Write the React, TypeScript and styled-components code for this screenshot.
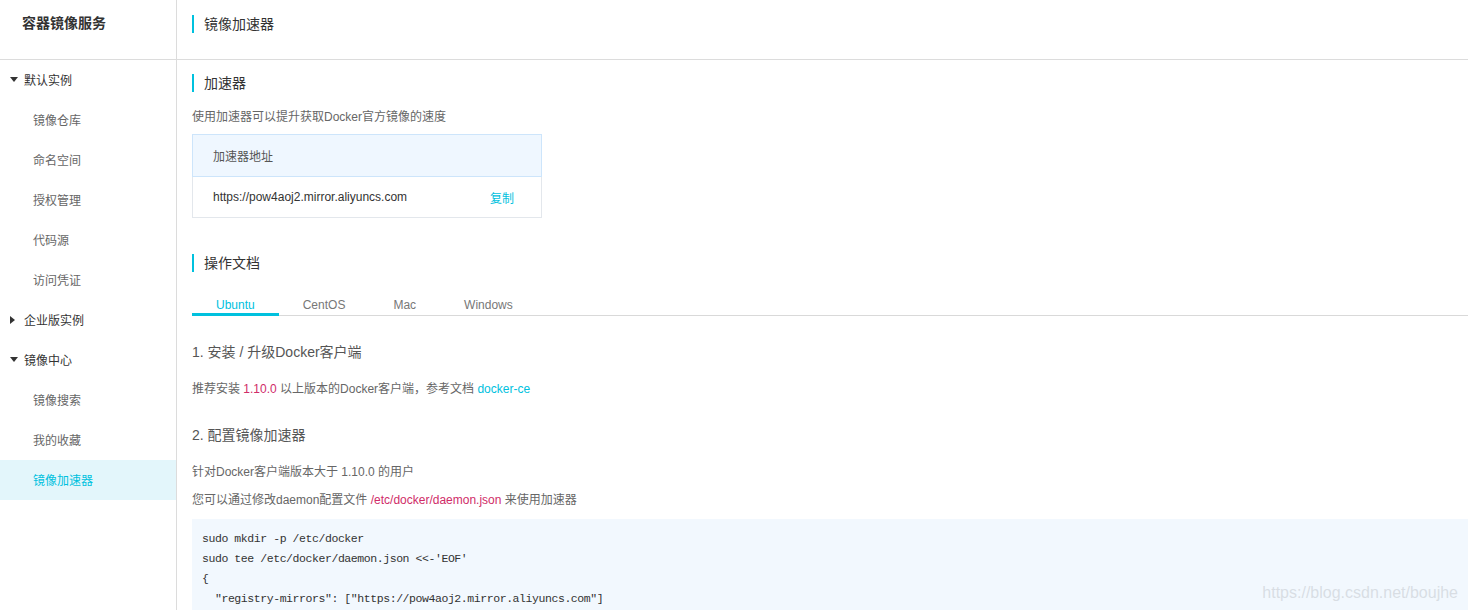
import React from 'react';
import styled, { createGlobalStyle } from 'styled-components';

const GlobalStyle = createGlobalStyle`
  html, body {
    margin: 0;
    padding: 0;
    background: #fff;
  }
  * {
    box-sizing: border-box;
  }
  body {
    font-family: "Liberation Sans", Arial, "Noto Sans CJK SC", sans-serif;
    color: #333;
  }
`;

type NavItem = {
  label: string;
  level: 'group' | 'item';
  open?: boolean;
  active?: boolean;
};

const navItems: NavItem[] = [
  { label: '默认实例', level: 'group', open: true },
  { label: '镜像仓库', level: 'item' },
  { label: '命名空间', level: 'item' },
  { label: '授权管理', level: 'item' },
  { label: '代码源', level: 'item' },
  { label: '访问凭证', level: 'item' },
  { label: '企业版实例', level: 'group', open: false },
  { label: '镜像中心', level: 'group', open: true },
  { label: '镜像搜索', level: 'item' },
  { label: '我的收藏', level: 'item' },
  { label: '镜像加速器', level: 'item', active: true },
];

const tabs = ['Ubuntu', 'CentOS', 'Mac', 'Windows'];

const codeLines = [
  'sudo mkdir -p /etc/docker',
  "sudo tee /etc/docker/daemon.json <<-'EOF'",
  '{',
  '  "registry-mirrors": ["https://pow4aoj2.mirror.aliyuncs.com"]',
];

const Caret = ({ open }: { open?: boolean }) => (
  <CaretBox>
    {open ? (
      <svg width="8" height="5" viewBox="0 0 8 5">
        <path d="M0 0 L8 0 L4 5 Z" fill="#333" />
      </svg>
    ) : (
      <svg width="5" height="8" viewBox="0 0 5 8">
        <path d="M0 0 L5 4 L0 8 Z" fill="#333" />
      </svg>
    )}
  </CaretBox>
);

export default function App() {
  return (
    <>
      <GlobalStyle />
      <Page>
        <Sidebar>
          <SidebarHeader>容器镜像服务</SidebarHeader>
          <Nav>
            {navItems.map((item) =>
              item.level === 'group' ? (
                <GroupRow key={item.label}>
                  <Caret open={item.open} />
                  {item.label}
                </GroupRow>
              ) : (
                <ItemRow key={item.label} $active={item.active}>
                  {item.label}
                </ItemRow>
              ),
            )}
          </Nav>
        </Sidebar>
        <Main>
          <PageHeader>
            <Accent />
            <PageTitle>镜像加速器</PageTitle>
          </PageHeader>
          <Content>
            <SectionTitle>
              <Accent />
              <span>加速器</span>
            </SectionTitle>
            <Desc $top={15}>使用加速器可以提升获取Docker官方镜像的速度</Desc>
            <AddrBox>
              <AddrHead>加速器地址</AddrHead>
              <AddrBody>
                <span>https://pow4aoj2.mirror.aliyuncs.com</span>
                <CopyLink>复制</CopyLink>
              </AddrBody>
            </AddrBox>

            <SectionTitle $top={36}>
              <Accent />
              <span>操作文档</span>
            </SectionTitle>
            <TabBar>
              {tabs.map((t, i) => (
                <Tab key={t} $active={i === 0}>
                  {t}
                </Tab>
              ))}
            </TabBar>

            <StepTitle $top={26}>1. 安装 / 升级Docker客户端</StepTitle>
            <Desc $top={17}>
              推荐安装 <Mark>1.10.0</Mark> 以上版本的Docker客户端，参考文档{' '}
              <Link>docker-ce</Link>
            </Desc>

            <StepTitle $top={26}>2. 配置镜像加速器</StepTitle>
            <Desc $top={17}>针对Docker客户端版本大于 1.10.0 的用户</Desc>
            <Desc $top={8}>
              您可以通过修改daemon配置文件 <Mark>/etc/docker/daemon.json</Mark> 来使用加速器
            </Desc>
            <CodeBlock>
              {codeLines.map((line) => (
                <CodeLine key={line}>{line}</CodeLine>
              ))}
            </CodeBlock>
          </Content>
        </Main>
        <Watermark>https://blog.csdn.net/boujhe</Watermark>
      </Page>
    </>
  );
}

const Page = styled('div')`
  position: relative;
  display: flex;
  width: 100%;
  height: 100vh;
  overflow: hidden;
  background: #fff;
`;

const Sidebar = styled('aside')`
  flex: 0 0 177px;
  display: flex;
  flex-direction: column;
  border-right: 1px solid #dcdcdc;
`;

const SidebarHeader = styled('div')`
  flex-shrink: 0;
  height: 60px;
  padding: 14px 0 0 22px;
  font-size: 14px;
  line-height: 18px;
  font-weight: 700;
  color: #333;
  border-bottom: 1px solid #dcdcdc;
`;

const Nav = styled('ul')`
  list-style: none;
  margin: 0;
  padding: 0;
  display: flex;
  flex-direction: column;
`;

const GroupRow = styled('li')`
  flex-shrink: 0;
  height: 40px;
  display: flex;
  align-items: center;
  padding: 0 0 1px 10px;
  font-size: 12px;
  color: #333;
`;

const CaretBox = styled('span')`
  width: 14px;
  display: inline-flex;
  align-items: center;
  justify-content: flex-start;
  svg {
    display: block;
  }
`;

const ItemRow = styled('li')<{ $active?: boolean }>`
  flex-shrink: 0;
  height: 40px;
  display: flex;
  align-items: center;
  padding: 0 0 1px 33px;
  font-size: 12px;
  color: ${({ $active }) => ($active ? '#00c1de' : '#666')};
  background: ${({ $active }) => ($active ? '#e3f6fb' : 'transparent')};
`;

const Main = styled('main')`
  flex: 1;
  min-width: 0;
  display: flex;
  flex-direction: column;
`;

const PageHeader = styled('div')`
  flex-shrink: 0;
  height: 60px;
  display: flex;
  align-items: flex-start;
  padding: 15px 0 0 15px;
  border-bottom: 1px solid #dcdcdc;
`;

const Accent = styled('i')`
  display: block;
  flex-shrink: 0;
  width: 2px;
  height: 18px;
  background: #00c1de;
  margin-right: 10px;
`;

const PageTitle = styled('h1')`
  margin: 0;
  font-size: 14px;
  line-height: 18px;
  font-weight: 400;
  color: #333;
`;

const Content = styled('div')`
  flex-shrink: 0;
  display: flex;
  flex-direction: column;
  align-items: flex-start;
  padding-left: 15px;
`;

const SectionTitle = styled('h2')<{ $top?: number }>`
  display: flex;
  align-items: center;
  margin: ${({ $top }) => $top ?? 14}px 0 0;
  font-size: 14px;
  line-height: 18px;
  font-weight: 400;
  color: #333;
`;

const Desc = styled('p')<{ $top: number }>`
  margin: ${({ $top }) => $top}px 0 0;
  font-size: 12px;
  line-height: 20px;
  color: #666;
`;

const AddrBox = styled('div')`
  margin-top: 7px;
  width: 350px;
  display: flex;
  flex-direction: column;
  font-size: 12px;
`;

const AddrHead = styled('div')`
  height: 43px;
  display: flex;
  align-items: center;
  padding-left: 20px;
  background: #eff7ff;
  border: 1px solid #cde5fb;
  color: #555;
`;

const AddrBody = styled('div')`
  height: 41px;
  display: flex;
  align-items: center;
  justify-content: space-between;
  padding: 0 27px 0 20px;
  border: 1px solid #e3e7ec;
  border-top: none;
  color: #333;
`;

const CopyLink = styled('a')`
  color: #00c1de;
  cursor: pointer;
`;

const TabBar = styled('div')`
  align-self: stretch;
  margin-top: 16px;
  display: flex;
  border-bottom: 1px solid #d9d9d9;
`;

const Tab = styled('div')<{ $active?: boolean }>`
  padding: 9px 24px 0;
  margin-bottom: -1px;
  font-size: 12px;
  line-height: 16px;
  color: ${({ $active }) => ($active ? '#00c1de' : '#777')};
  border-bottom: 3px solid ${({ $active }) => ($active ? '#00c1de' : 'transparent')};
`;

const StepTitle = styled('h3')<{ $top: number }>`
  margin: ${({ $top }) => $top}px 0 0;
  font-size: 14px;
  line-height: 20px;
  font-weight: 400;
  color: #555;
`;

const Mark = styled('span')`
  color: #d02c68;
`;

const Link = styled('a')`
  color: #00c1de;
`;

const CodeBlock = styled('pre')`
  align-self: stretch;
  margin: 9px 0 0;
  padding: 10px 10px 10px;
  background: #f2f8fe;
  font-family: "Liberation Mono", "Courier New", monospace;
  font-size: 11.5px;
  letter-spacing: -0.43px;
  line-height: 20px;
  color: #333;
`;

const CodeLine = styled('div')`
  white-space: pre;
`;

const Watermark = styled('div')`
  position: absolute;
  right: 10px;
  bottom: 8px;
  font-size: 16px;
  color: rgba(205, 210, 216, 0.7);
  pointer-events: none;
`;
